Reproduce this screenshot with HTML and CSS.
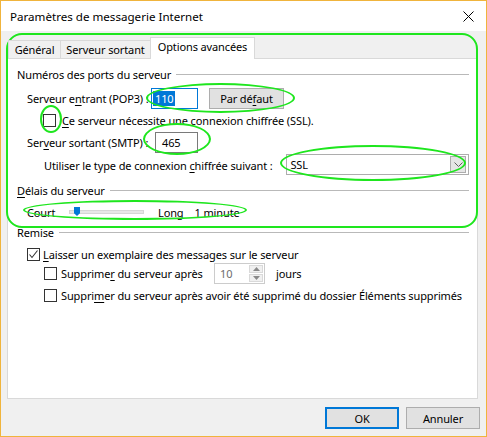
FILE: index.html
```html
<!DOCTYPE html>
<html lang="fr">
<head>
<meta charset="utf-8">
<title>Paramètres de messagerie Internet</title>
<link rel="stylesheet" href="styles.css">
</head>
<body>
<div class="window">
  <div class="titlebar">
    <span class="title">Paramètres de messagerie Internet</span>
    <svg class="close" width="11" height="11" viewBox="0 0 11 11"><path d="M0.5 0.5L10.5 10.5M10.5 0.5L0.5 10.5" stroke="#000" stroke-width="1" fill="none"/></svg>
  </div>
  <div class="main">
    <div class="tabs">
      <div class="tab tab-general">Général</div>
      <div class="tab tab-out">Serveur sortant</div>
      <div class="tab tab-adv selected">Options avancées</div>
    </div>
    <div class="panel">
      <div class="group-head">Numéros des ports du serveur</div>
      <div class="row row-pop">
        <span class="lbl lbl-pop">Serveur e<u>n</u>trant (POP3) :</span>
        <span class="textbox focused"><span class="sel">110</span></span>
        <span class="button btn-default">Par dé<u>f</u>aut</span>
      </div>
      <div class="row row-ssl">
        <span class="check"></span>
        <span class="cb-label"><u>C</u>e serveur nécessite une connexion chiffrée (SSL).</span>
      </div>
      <div class="row row-smtp">
        <span class="lbl lbl-smtp">Ser<u>v</u>eur sortant (SMTP) :</span>
        <span class="textbox tb-smtp">465</span>
      </div>
      <div class="row row-enc">
        <span class="lbl lbl-enc">Utiliser le type de connexion <u>c</u>hiffrée suivant :</span>
        <span class="combo"><span class="combo-text">SSL</span><span class="combo-btn"><svg width="9" height="5" viewBox="0 0 9 5"><path d="M0.5 0.5L4.5 4.5L8.5 0.5" stroke="#606060" fill="none"/></svg></span></span>
      </div>
      <div class="group-head head-delay"><span><u>D</u>élais du serveur</span></div>
      <div class="row row-slider">
        <span class="court">Court</span>
        <span class="track"><span class="thumb"></span></span>
        <span class="long">Long</span>
        <span class="minute">1 minute</span>
      </div>
      <div class="group-head head-remise">Remise</div>
      <div class="row row-keep">
        <span class="check checked"><svg width="11" height="11" viewBox="0 0 11 11"><path d="M1.5 5.5L4 8.5L9.5 1.5" stroke="#333" stroke-width="1.1" fill="none"/></svg></span>
        <span class="cb-label keep-label"><u>L</u>aisser un exemplaire des messages sur le serveur</span>
      </div>
      <div class="row row-del">
        <span class="check"></span>
        <span class="cb-label del-label">Supprime<u>r</u> du serveur après</span>
        <span class="spin"><span class="spin-text">10</span><span class="spin-btns"><span class="spin-up"><svg width="7" height="4" viewBox="0 0 7 4"><path d="M0 4L3.5 0L7 4Z" fill="#8a8a8a"/></svg></span><span class="spin-down"><svg width="7" height="4" viewBox="0 0 7 4"><path d="M0 0L3.5 4L7 0Z" fill="#8a8a8a"/></svg></span></span></span>
        <span class="jours">jours</span>
      </div>
      <div class="row row-del2">
        <span class="check"></span>
        <span class="cb-label del-label">Suppri<u>m</u>er du serveur après avoir été supprimé du dossier Éléments supprimés</span>
      </div>
    </div>
    <div class="buttons">
      <span class="button btn-ok">OK</span>
      <span class="button btn-cancel">Annuler</span>
    </div>
  </div>
  <div class="marks">
    <span class="mark mark-main"></span>
    <span class="mark mark-pop"></span>
    <span class="mark mark-ssl"></span>
    <span class="mark mark-smtp"></span>
    <span class="mark mark-combo"></span>
    <span class="mark mark-slider"></span>
  </div>
</div>
</body>
</html>
```

FILE: styles.css
```css
* { box-sizing: border-box; }
html, body { margin: 0; padding: 0; }
body {
  width: 487px;
  height: 437px;
  font-family: "Noto Sans", "Liberation Sans", sans-serif;
  font-size: 11px;
  letter-spacing: -0.12px;
  color: #000;
  background: #fff;
  overflow: hidden;
}
u { text-decoration: underline; text-underline-offset: 2px; }

.window {
  position: relative;
  width: 487px;
  height: 437px;
  border: 1px solid #f0b43c;
  background: #f0f0f0;
  display: flex;
  flex-direction: column;
}

.titlebar {
  height: 30px;
  background: #fff;
  display: flex;
  align-items: center;
  justify-content: space-between;
  padding: 0 12px 0 9px;
  flex: none;
}
.title { font-size: 11.6px; letter-spacing: 0; }
.close { display: block; }

.main {
  flex: 1;
  padding: 6px 6px 0 6px;
  display: flex;
  flex-direction: column;
  align-items: flex-start;
}

.tabs {
  display: flex;
  height: 22px;
  margin-left: 1px;
  margin-bottom: -1px;
  position: relative;
  z-index: 1;
  align-items: flex-start;
}
.tab {
  height: 18px;
  margin-top: 3px;
  border: 1px solid #d9d9d9;
  border-bottom: none;
  background: #f0f0f0;
  text-align: center;
  line-height: 17px;
  white-space: nowrap;
}
.tab-general { width: 53px; }
.tab-out { width: 91px; margin-left: -1px; }
.tab-adv { width: 105px; margin-left: -1px; }
.tab.selected {
  height: 22px;
  margin-top: 0;
  background: #fff;
  line-height: 18px;
  padding-bottom: 3px;
}

.panel {
  width: 471px;
  height: 341px;
  border: 1px solid #d9d9d9;
  background: #fff;
  padding: 7px 8px 0 9px;
  display: flex;
  flex-direction: column;
  flex: none;
}

.group-head {
  display: flex;
  align-items: center;
  height: 16px;
  gap: 5px;
  white-space: nowrap;
}
.group-head::after {
  content: "";
  flex: 1;
  height: 1px;
  margin-top: 1px;
  background: #b9b9b9;
}
.head-delay { margin-top: 7px; }
.head-remise { margin-top: 4px; }

.row {
  display: flex;
  align-items: center;
  white-space: nowrap;
}

.row-pop { height: 21px; margin-top: 6px; padding-left: 10px; }
.lbl-pop { width: 124px; }
.textbox {
  display: flex;
  align-items: center;
  height: 21px;
  border: 1px solid #7a7a7a;
  background: #fff;
}
.textbox.focused {
  width: 47px;
  border-color: #0078d7;
  padding-left: 1px;
}
.sel {
  background: #0078d7;
  color: #fff;
  height: 15px;
  line-height: 15px;
  padding: 0 1px 0 2px;
}
.button {
  display: flex;
  align-items: center;
  justify-content: center;
  background: #e1e1e1;
  border: 1px solid #adadad;
}
.btn-default { width: 75px; height: 21px; margin-left: 11px; }

.row-ssl { height: 19px; margin-top: 2px; padding-left: 26px; }
.check {
  width: 13px;
  height: 13px;
  border: 1px solid #333;
  background: #fff;
  flex: none;
  display: flex;
  align-items: center;
  justify-content: center;
}
.check svg { display: block; }
.row-ssl .cb-label { margin-left: 6px; }

.row-smtp { height: 21px; margin-top: 2px; padding-left: 10px; }
.lbl-smtp { width: 128px; }
.tb-smtp { width: 43px; padding-left: 6px; }

.row-enc { height: 21px; margin-top: 1px; padding-left: 27px; }
.lbl-enc { width: 243px; padding-top: 2px; }
.combo {
  width: 183px;
  height: 21px;
  border: 1px solid #adadad;
  background: #fff;
  display: flex;
  align-items: center;
  justify-content: space-between;
  padding: 1px 2px 1px 3px;
}
.combo-btn {
  width: 16px;
  height: 100%;
  background: #e5e5e5;
  border: 1px solid #adadad;
  display: flex;
  align-items: center;
  justify-content: center;
}
.combo-btn svg { display: block; }

.row-slider { height: 16px; margin-top: 6px; padding-left: 10px; }
.court { width: 42px; }
.track {
  position: relative;
  width: 75px;
  height: 4px;
  background: #e7e7e7;
  border: 1px solid #d6d6d6;
}
.thumb {
  position: absolute;
  left: 4px;
  top: -4px;
  width: 6px;
  height: 9px;
  background: #0078d7;
  clip-path: polygon(0 0, 100% 0, 100% 70%, 50% 100%, 0 70%);
}
.long { margin-left: 14px; }
.minute { margin-left: 11px; }

.row-keep { height: 17px; margin-top: 6px; padding-left: 10px; }
.keep-label { margin-left: 3px; }
.row-del { height: 21px; padding-left: 27px; }
.del-label { margin-left: 4px; }
.row-del .del-label { width: 153px; }
.spin {
  width: 51px;
  height: 21px;
  border: 1px solid #cccccc;
  display: flex;
  align-items: center;
  justify-content: space-between;
  padding: 1px 1px 1px 5px;
  color: #6d6d6d;
}
.spin-btns {
  width: 14px;
  height: 100%;
  display: flex;
  flex-direction: column;
  gap: 1px;
}
.spin-up, .spin-down {
  flex: 1;
  background: #f0f0f0;
  border: 1px solid #d9d9d9;
  display: flex;
  align-items: center;
  justify-content: center;
}
.spin-btns svg { display: block; }
.jours { margin-left: 11px; }
.row-del2 { height: 17px; margin-top: 3px; padding-left: 27px; }

.buttons {
  align-self: stretch;
  display: flex;
  justify-content: flex-end;
  gap: 7px;
  margin-top: 8px;
}
.btn-ok, .btn-cancel { width: 74px; height: 22px; }
.btn-ok { border: 2px solid #0078d7; }

.marks {
  position: absolute;
  left: -1px;
  top: -1px;
  width: 487px;
  height: 437px;
  pointer-events: none;
}
.mark {
  position: absolute;
  border: 2px solid #1ee61e;
}
.mark-main { left: 6px; top: 33px; width: 472px; height: 195px; border-radius: 16px; }
.mark-pop { left: 146px; top: 83px; width: 149px; height: 30px; border-radius: 50%; }
.mark-ssl { left: 40px; top: 105px; width: 22px; height: 28px; border-radius: 50%; }
.mark-smtp { left: 143px; top: 123px; width: 68px; height: 32px; border-radius: 50%; }
.mark-combo { left: 280px; top: 145px; width: 186px; height: 36px; border-radius: 50%; }
.mark-slider { left: 23px; top: 200px; width: 224px; height: 20px; border-radius: 50%; }
```
